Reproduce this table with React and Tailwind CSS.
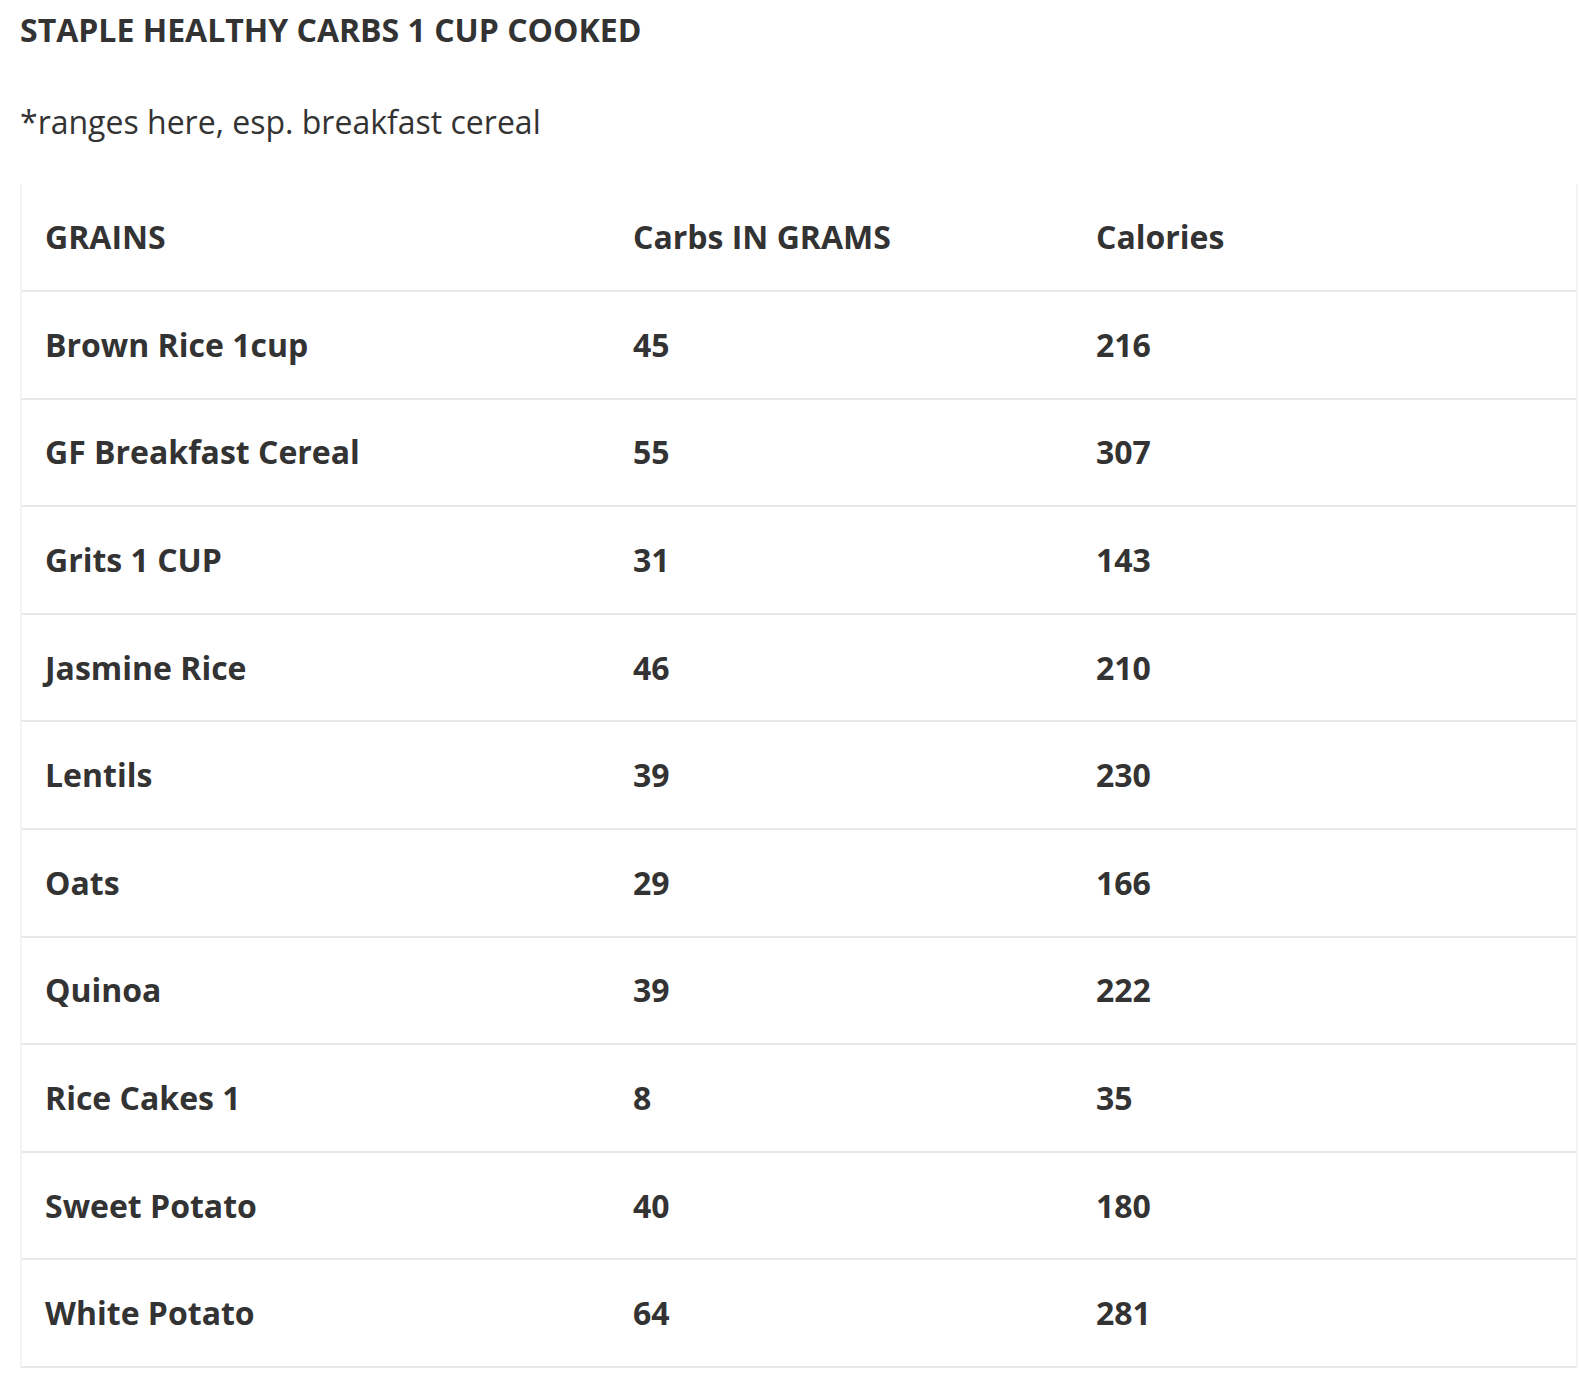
import React from "react";

const rows = [
  ["Brown Rice 1cup", "45", "216"],
  ["GF Breakfast Cereal", "55", "307"],
  ["Grits 1 CUP", "31", "143"],
  ["Jasmine Rice", "46", "210"],
  ["Lentils", "39", "230"],
  ["Oats", "29", "166"],
  ["Quinoa", "39", "222"],
  ["Rice Cakes 1", "8", "35"],
  ["Sweet Potato", "40", "180"],
  ["White Potato", "64", "281"],
];

export default function App() {
  return (
    <div
      className="bg-white w-[1596px] min-h-[1390px] text-[#333333] px-[20px] pt-[10px]"
      style={{ fontFamily: '"Open Sans", "Liberation Sans", sans-serif' }}
    >
      <div className="text-[32px] leading-[40px] font-bold">STAPLE HEALTHY CARBS 1 CUP COOKED</div>
      <div className="mt-[52px] text-[32px] leading-[40px] font-normal">*ranges here, esp. breakfast cereal</div>
      <div className="mt-[42px] w-[1558px] border-x-2 border-[#f3f3f3]">
        <div className="grid grid-cols-[587px_464px_1fr] h-[108px] items-center border-b-2 border-[#e8e8e8] text-[32px] font-bold">
          <div className="pl-[23px]">GRAINS</div>
          <div className="pl-[24px]">Carbs IN GRAMS</div>
          <div className="pl-[23px]">Calories</div>
        </div>
        {rows.map((r) => (
          <div
            key={r[0]}
            className="grid grid-cols-[587px_464px_1fr] h-[107.6px] items-center border-b-2 border-[#e8e8e8] text-[32px] font-bold"
          >
            <div className="pl-[23px]">{r[0]}</div>
            <div className="pl-[24px]">{r[1]}</div>
            <div className="pl-[23px]">{r[2]}</div>
          </div>
        ))}
      </div>
    </div>
  );
}
